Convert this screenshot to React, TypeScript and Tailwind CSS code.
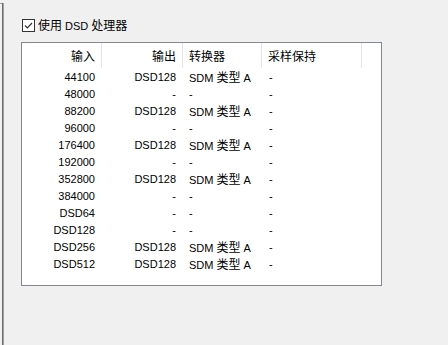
import React from "react";

const latin = { fontFamily: '"Liberation Sans", "Noto Sans CJK SC", sans-serif' };

type Row = { input: string; output: string; conv: boolean };

const rows: Row[] = [
  { input: "44100", output: "DSD128", conv: true },
  { input: "48000", output: "-", conv: false },
  { input: "88200", output: "DSD128", conv: true },
  { input: "96000", output: "-", conv: false },
  { input: "176400", output: "DSD128", conv: true },
  { input: "192000", output: "-", conv: false },
  { input: "352800", output: "DSD128", conv: true },
  { input: "384000", output: "-", conv: false },
  { input: "DSD64", output: "-", conv: false },
  { input: "DSD128", output: "-", conv: false },
  { input: "DSD256", output: "DSD128", conv: true },
  { input: "DSD512", output: "DSD128", conv: true },
];

function Cjk({ children }: { children: React.ReactNode }) {
  return <span className="text-[12px]">{children}</span>;
}

function Checkbox() {
  return (
    <svg width="13" height="13" viewBox="0 0 13 13" className="shrink-0">
      <rect x="0.5" y="0.5" width="12" height="12" fill="#ffffff" stroke="#333333" />
      <path d="M3 6.5 L5.3 8.8 L10 4" fill="none" stroke="#333333" strokeWidth="1.2" />
    </svg>
  );
}

export default function App() {
  return (
    <div className="flex h-[345px] w-[448px] bg-[#f0f0f0] text-[11px] leading-none text-black" style={latin}>
      <div className="mt-[3px] flex w-[4px]">
        <div className="w-[2px] border-t border-[#a0a0a0]" />
        <div className="w-[1px] bg-[#6d6d6d]" />
        <div className="w-[1px] bg-[#a0a0a0]" />
      </div>
      <div className="flex-1 pl-[17px] pt-[19px]">
        <div className="ml-[1px] flex h-[13px] items-center gap-[3px]">
          <Checkbox />
          <span className="pt-[1px] leading-[13px]">
            <Cjk>使用</Cjk> DSD <Cjk>处理器</Cjk>
          </span>
        </div>
        <div className="mt-[10px] h-[244px] w-[361px] border border-[#828790] bg-white">
          <div className="flex h-[25px] items-center">
            <div className="flex h-full w-[80px] items-center justify-end border-r border-[#e5e5e5] pr-[6px] pt-[2px]">
              <Cjk>输入</Cjk>
            </div>
            <div className="flex h-full w-[81px] items-center justify-end border-r border-[#e5e5e5] pr-[6px] pt-[2px]">
              <Cjk>输出</Cjk>
            </div>
            <div className="flex h-full w-[79px] items-center border-r border-[#e5e5e5] pl-[6px] pt-[2px]">
              <Cjk>转换器</Cjk>
            </div>
            <div className="flex h-full w-[100px] items-center border-r border-[#e5e5e5] pl-[6px] pt-[2px]">
              <Cjk>采样保持</Cjk>
            </div>
          </div>
          {rows.map((r, i) => (
            <div key={i} className="flex h-[17px] items-center pt-[2px]">
              <div className="w-[80px] pr-[7px] text-right">{r.input}</div>
              <div className="w-[81px] pr-[7px] text-right">{r.output}</div>
              <div className="w-[79px] pl-[6px]">
                {r.conv ? (
                  <>
                    SDM <Cjk>类型</Cjk> A
                  </>
                ) : (
                  "-"
                )}
              </div>
              <div className="w-[100px] pl-[7px]">-</div>
            </div>
          ))}
        </div>
      </div>
    </div>
  );
}
